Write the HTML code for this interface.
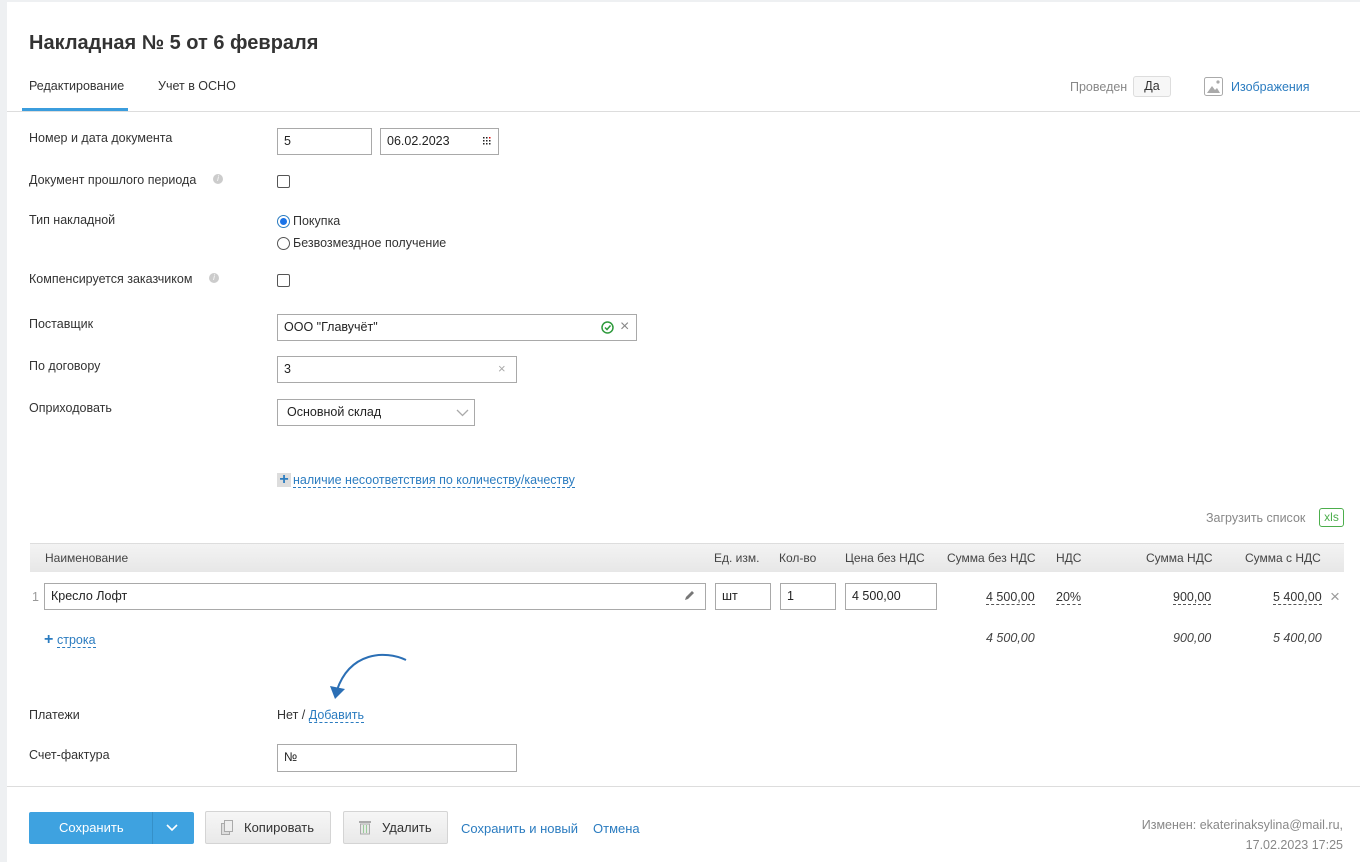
<!DOCTYPE html>
<html><head><meta charset="utf-8"><style>
*{box-sizing:border-box;margin:0;padding:0}
body{width:1360px;height:862px;overflow:hidden;background:#eef0f2;font-family:"Liberation Sans",Arial,sans-serif;font-size:12px;color:#333;position:relative}
.page{position:absolute;left:7px;top:2px;right:0;bottom:0;background:#fff}
.a{position:absolute;white-space:nowrap}
.inp{position:absolute;border:1px solid #a9a9a9;background:#fff;height:27px;padding:5px 6px;font-size:12.5px;color:#222}
.lbl{position:absolute;left:29px;font-size:12.5px;color:#333}
.blue{color:#2b7cc0}
.dash{border-bottom:1px dashed #2b7cc0}
.th{position:absolute;top:551px;font-size:12px;color:#444}
.num{position:absolute;font-size:12.5px;color:#333;border-bottom:1px dashed #555;line-height:14px}
.it{position:absolute;font-size:12.5px;font-style:italic;color:#444}
.btn{position:absolute;top:811px;height:33px;border:1px solid #d4d4d4;border-radius:2px;background:linear-gradient(#f6f6f6,#e9e9e9);font-size:13px;color:#333;line-height:31px}
</style></head><body>
<div class="page"></div>
<div class="a" style="left:29px;top:32px;font-size:20px;font-weight:bold;color:#333">Накладная № 5 от 6 февраля</div>
<div class="a" style="left:29px;top:79px;font-size:12.5px;color:#333">Редактирование</div>
<div class="a" style="left:158px;top:79px;font-size:12.5px;color:#333">Учет в ОСНО</div>
<div class="a" style="left:22px;top:108px;width:106px;height:3px;background:#3b9ddd"></div>
<div class="a" style="left:7px;top:111px;width:1353px;height:1px;background:#ddd"></div>
<div class="a" style="left:1070px;top:80px;font-size:12.5px;color:#888">Проведен</div>
<div class="a" style="left:1133px;top:76px;width:38px;height:21px;border:1px solid #ddd;border-radius:3px;background:#f7f7f7;text-align:center;line-height:19px;font-size:12.5px;color:#333">Да</div>
<svg class="a" style="left:1204px;top:77px" width="19" height="19" viewBox="0 0 19 19"><rect x="0.5" y="0.5" width="18" height="18" rx="2" fill="#fff" stroke="#aaa"/><path d="M3 16 L8 9 L11 13 L13 11 L16 16Z" fill="#aaa"/><circle cx="14" cy="5" r="1.6" fill="#aaa"/></svg>
<div class="a blue" style="left:1231px;top:80px;font-size:12.5px">Изображения</div>

<div class="lbl" style="top:131px">Номер и дата документа</div>
<div class="inp" style="left:277px;top:128px;width:95px">5</div>
<div class="inp" style="left:380px;top:128px;width:119px">06.02.2023</div>
<svg class="a" style="left:483px;top:137px" width="8" height="8"><g fill="#222"><rect x="0" y="0" width="1.5" height="1.5"/><rect x="3" y="0" width="1.5" height="1.5"/><rect x="6" y="0" width="1.5" height="1.5" fill="#d00"/><rect x="0" y="3" width="1.5" height="1.5"/><rect x="3" y="3" width="1.5" height="1.5"/><rect x="6" y="3" width="1.5" height="1.5"/><rect x="0" y="6" width="1.5" height="1.5"/><rect x="3" y="6" width="1.5" height="1.5"/><rect x="6" y="6" width="1.5" height="1.5"/></g></svg>

<div class="lbl" style="top:173px">Документ прошлого периода</div>
<div class="a" style="left:213px;top:174px;width:10px;height:10px;border-radius:50%;background:#ccc;color:#fff;font-size:8px;text-align:center;line-height:10px;font-style:italic">i</div>
<div class="a" style="left:277px;top:175px;width:13px;height:13px;border:1px solid #555;border-radius:2px"></div>

<div class="lbl" style="top:213px">Тип накладной</div>
<div class="a" style="left:277px;top:215px;width:13px;height:13px;border:1px solid #2b7cc0;border-radius:50%"><div style="margin:2px;width:7px;height:7px;border-radius:50%;background:#1a73e8"></div></div>
<div class="a" style="left:293px;top:214px;font-size:12.5px">Покупка</div>
<div class="a" style="left:277px;top:237px;width:13px;height:13px;border:1px solid #555;border-radius:50%"></div>
<div class="a" style="left:293px;top:236px;font-size:12.5px">Безвозмездное получение</div>

<div class="lbl" style="top:272px">Компенсируется заказчиком</div>
<div class="a" style="left:209px;top:273px;width:10px;height:10px;border-radius:50%;background:#ccc;color:#fff;font-size:8px;text-align:center;line-height:10px;font-style:italic">i</div>
<div class="a" style="left:277px;top:274px;width:13px;height:13px;border:1px solid #555;border-radius:2px"></div>

<div class="lbl" style="top:317px">Поставщик</div>
<div class="inp" style="left:277px;top:314px;width:360px">ООО "Главучёт"</div>
<svg class="a" style="left:601px;top:321px" width="13" height="13"><circle cx="6.5" cy="6.5" r="5.5" fill="none" stroke="#2e9a3c" stroke-width="1.5"/><path d="M4 6.5 L6 8.5 L9.5 4.5" fill="none" stroke="#2e9a3c" stroke-width="1.5"/></svg>
<div class="a" style="left:620px;top:318px;font-size:16px;color:#888">×</div>

<div class="lbl" style="top:359px">По договору</div>
<div class="inp" style="left:277px;top:356px;width:240px">3</div>
<div class="a" style="left:498px;top:361px;font-size:13px;color:#aaa">×</div>

<div class="lbl" style="top:401px">Оприходовать</div>
<div class="inp" style="left:277px;top:399px;width:198px;padding-left:9px">Основной склад</div>
<svg class="a" style="left:456px;top:409px" width="13" height="8"><path d="M1 1 L6.5 6.5 L12 1" fill="none" stroke="#aaa" stroke-width="1.3"/></svg>

<div class="a" style="left:277px;top:473px;width:14px;height:14px;background:#ddd;color:#2b7cc0;font-size:16px;font-weight:bold;line-height:14px;text-align:center">+</div>
<div class="a blue dash" style="left:293px;top:473px;font-size:12.5px;line-height:14px">наличие несоответствия по количеству/качеству</div>

<div class="a" style="left:1206px;top:511px;font-size:12.5px;color:#888">Загрузить список</div>
<div class="a" style="left:1319px;top:508px;width:25px;height:19px;border:1px solid #4cae4c;border-radius:3px;color:#4cae4c;font-size:12px;text-align:center;line-height:17px">xls</div>

<div class="a" style="left:30px;top:543px;width:1314px;height:29px;background:linear-gradient(#f3f3f3,#e7e7e7);border-top:1px solid #ddd"></div>
<div class="th" style="left:45px">Наименование</div>
<div class="th" style="left:714px">Ед. изм.</div>
<div class="th" style="left:779px">Кол-во</div>
<div class="th" style="left:845px">Цена без НДС</div>
<div class="th" style="left:947px">Сумма без НДС</div>
<div class="th" style="left:1056px">НДС</div>
<div class="th" style="left:1146px">Сумма НДС</div>
<div class="th" style="left:1245px">Сумма с НДС</div>

<div class="a" style="left:32px;top:590px;color:#999;font-size:12.5px">1</div>
<div class="inp" style="left:44px;top:583px;width:662px">Кресло Лофт</div>
<svg class="a" style="left:684px;top:590px" width="11" height="11"><path d="M1 10 L2 7 L8 1 L10 3 L4 9Z" fill="#777"/></svg>
<div class="inp" style="left:715px;top:583px;width:56px">шт</div>
<div class="inp" style="left:780px;top:583px;width:56px">1</div>
<div class="inp" style="left:845px;top:583px;width:92px">4 500,00</div>
<div class="num" style="left:986px;top:590px">4 500,00</div>
<div class="num" style="left:1056px;top:590px">20%</div>
<div class="num" style="left:1173px;top:590px">900,00</div>
<div class="num" style="left:1273px;top:590px">5 400,00</div>
<div class="a" style="left:1330px;top:587px;font-size:17px;color:#999">×</div>

<div class="a" style="left:44px;top:631px;color:#2b7cc0;font-size:16px;font-weight:bold">+</div>
<div class="a blue dash" style="left:57px;top:633px;font-size:12.5px;line-height:14px">строка</div>
<div class="it" style="left:986px;top:631px">4 500,00</div>
<div class="it" style="left:1173px;top:631px">900,00</div>
<div class="it" style="left:1273px;top:631px">5 400,00</div>

<svg class="a" style="left:325px;top:650px" width="90" height="55"><path d="M81 10 C60 0 25 2 12 40" fill="none" stroke="#2b6fb5" stroke-width="2"/><path d="M5 36 L10 49 L20 39Z" fill="#2b6fb5"/></svg>

<div class="lbl" style="top:708px">Платежи</div>
<div class="a" style="left:277px;top:708px;font-size:12.5px">Нет / <span class="blue dash">Добавить</span></div>

<div class="lbl" style="top:748px">Счет-фактура</div>
<div class="inp" style="left:277px;top:744px;width:240px;height:28px">№</div>

<div class="a" style="left:7px;top:786px;width:1353px;height:1px;background:#ddd"></div>

<div class="a" style="left:29px;top:812px;width:165px;height:32px;background:#3ea2e0;border-radius:2px;color:#fff;font-size:13px;line-height:32px"><span style="position:absolute;left:30px">Сохранить</span><div style="position:absolute;left:123px;top:0;width:1px;height:32px;background:#3590c8"></div><svg style="position:absolute;left:137px;top:12px" width="12" height="8"><path d="M1 1 L6 6 L11 1" fill="none" stroke="#fff" stroke-width="1.6"/></svg></div>
<div class="btn" style="left:205px;width:126px"><svg style="position:absolute;left:15px;top:8px" width="12" height="15"><rect x="0.5" y="3.5" width="8" height="11" fill="#ddd" stroke="#aaa"/><rect x="3.5" y="0.5" width="8" height="11" fill="#eee" stroke="#aaa"/></svg><span style="position:absolute;left:38px">Копировать</span></div>
<div class="btn" style="left:343px;width:105px"><svg style="position:absolute;left:15px;top:8px" width="12" height="15"><rect x="0" y="1" width="12" height="2" fill="#aaa"/><rect x="1.5" y="4" width="9" height="10" fill="#e8e8e8" stroke="#aaa"/><path d="M4.5 5 V13 M7.5 5 V13" stroke="#9c9" /></svg><span style="position:absolute;left:38px">Удалить</span></div>
<div class="a blue" style="left:461px;top:821px;font-size:13px">Сохранить и новый</div>
<div class="a blue" style="left:593px;top:821px;font-size:13px">Отмена</div>
<div class="a" style="right:17px;top:815px;font-size:12.5px;color:#888;text-align:right;line-height:20px">Изменен: ekaterinaksylina@mail.ru,<br>17.02.2023 17:25</div>
</body></html>
